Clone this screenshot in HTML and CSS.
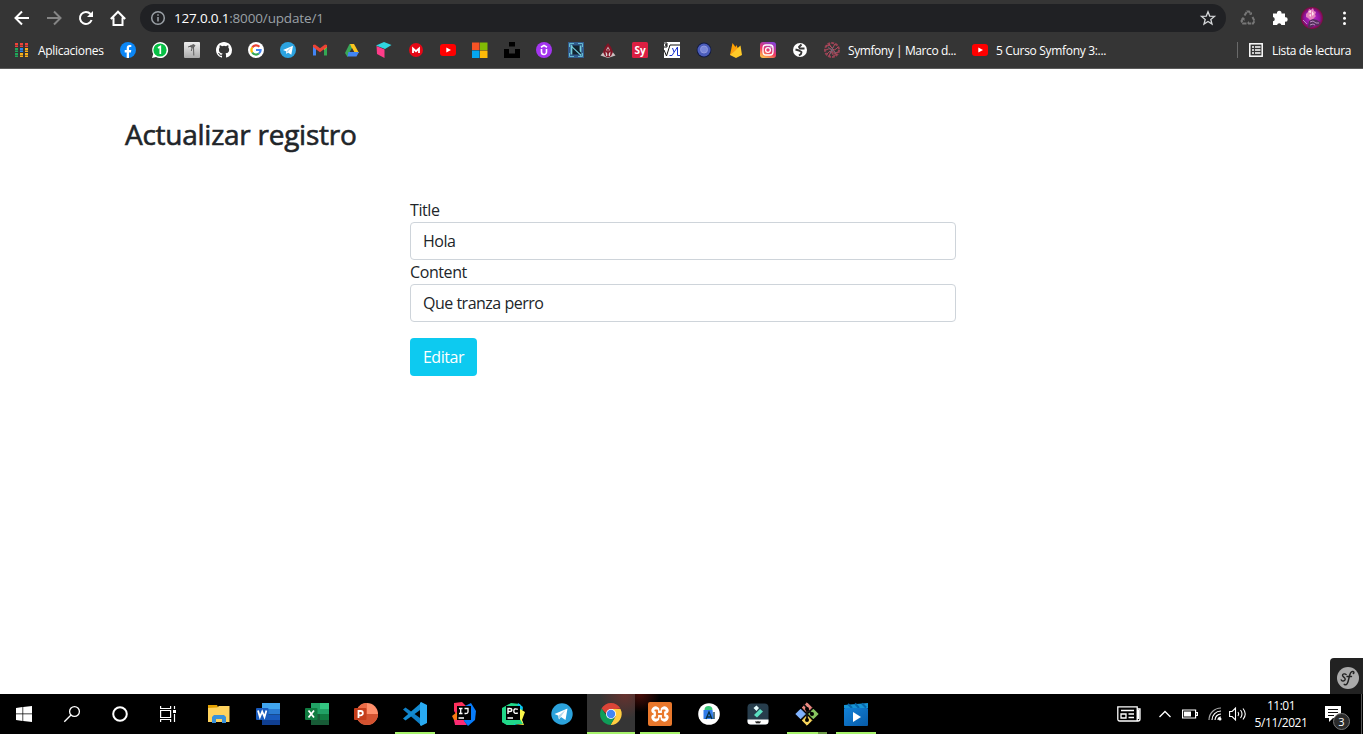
FILE: index.html
```html
<!DOCTYPE html>
<html lang="es">
<head>
<meta charset="utf-8">
<title>Actualizar registro</title>
<link rel="stylesheet" href="styles.css">
</head>
<body>
<header class="browser">
  <div class="toolbar">
    <nav class="nav">
      <svg class="i16" viewBox="0 0 16 16" fill="none" stroke="#fff" stroke-width="2"><path d="M15 8H2M8 1.5L1.500 8L8 14.500"/></svg>
      <svg class="i16" viewBox="0 0 16 16" fill="none" stroke="#858585" stroke-width="2"><path d="M1 8h13M8 1.500L14.500 8L8 14.500"/></svg>
      <svg class="i16" viewBox="0 0 16 16" fill="none" stroke="#fff" stroke-width="2"><path d="M13.600 10A6 6 0 1 1 12.500 4"/><path d="M15 1v6H9z" fill="#fff" stroke="none"/></svg>
      <svg class="i16" viewBox="0 0 16 16" fill="none" stroke="#fff" stroke-width="2"><path d="M0.800 9L8 1.700L15.200 9M3.500 7.500V15H12.500V7.500"/></svg>
    </nav>
    <div class="address">
      <svg class="i16" viewBox="0 0 16 16" fill="none" stroke="#9aa0a6" stroke-width="1.500"><circle cx="8" cy="8" r="6.300"/><path d="M8 7v4.500M8 4.200v1.600"/></svg>
      <span class="url"><b>127.0.0.1</b>:8000/update/1</span>
      <svg class="i16 star" viewBox="0 0 16 16" fill="none" stroke="#d5d7d9" stroke-width="1.300"><path d="M8 1.800L9.700 6.100L14.500 6.400L10.800 9.400L12 14L8 11.500L4 14L5.200 9.400L1.500 6.400L6.300 6.100Z"/></svg>
    </div>
    <div class="extensions">
      <svg class="i16" viewBox="0 0 16 16" fill="none" stroke="#777" stroke-width="2"><path d="M4.500 5.500L7 1.500H9L11 4.500M12.500 7L14.500 11L13 13.500H9M6.500 13.500H3L1.500 11L3.500 7.500" stroke-dasharray="4 .7"/><path d="M9 4.500h3V2zM9 11v4l-2-2zM1 8h3.500v3z" fill="#777" stroke="none"/></svg>
      <svg class="i16" viewBox="0 0 16 16" fill="#fff"><path d="M1 3.500h4a2.300 2.300 0 1 1 4.500 0H13V7.300a2.200 2.200 0 1 1 0 4.300V15H9.400a2.200 2.200 0 0 0-4.300 0H1v-3.700a2.200 2.200 0 0 0 0-4.300z"/></svg>
      <svg class="avatar" viewBox="0 0 22 22"><defs><radialGradient id="av"><stop offset="0" stop-color="#c32bd0"/><stop offset=".7" stop-color="#8f14a0"/><stop offset="1" stop-color="#7c0b3b"/></radialGradient></defs><circle cx="11" cy="11" r="11" fill="url(#av)"/><path d="M5 7l2-2 1-3 2 1 2-2 1 3 2 1-1 3 1 1-3 3-3 1-2-2-2-1z" fill="#e583bd"/><path d="M7 5l3-2v3zM11 4l2 3-2 2zM8 8l2-1v3z" fill="#ffe2ed"/><path d="M7 19l1-5 4-2 4 1 4 3-3 3-3-1-3 2-4 1z" fill="#54305c"/><path d="M9 15l3-1 3 2 3 0M9 18l3-1 2 1M2 13l4 4" stroke="#b98bc0" fill="none"/></svg>
      <svg class="i16" viewBox="0 0 16 16" fill="#fff"><circle cx="8.500" cy="3" r="1.500"/><circle cx="8.500" cy="8.300" r="1.500"/><circle cx="8.500" cy="13.500" r="1.500"/></svg>
    </div>
  </div>
  <div class="bookmarks">
    <div class="apps">
      <svg class="apps-icon" viewBox="0 0 13 14"><path fill="#ee4339" d="M0 0h3v4H0zM5 0h3v4H5zM10 0h3v4h-3z"/><path fill="#1fa85a" d="M0 5h3v4H0zM0 10h3v4H0z"/><path fill="#2688ee" d="M5 5h3v4H5z"/><path fill="#f9b11b" d="M10 5h3v4h-3zM5 10h3v4H5zM10 10h3v4h-3z"/><path d="M0 2.500h13M0 7.500h13M0 12.500h13" stroke="#353535" stroke-width=".5"/></svg>
      <span>Aplicaciones</span>
    </div>
    <div class="favs">
      <svg viewBox="0 0 16 16"><circle cx="8" cy="8" r="8" fill="#0b86f5"/><path fill="#fff" d="M6.700 16v-5.500H4.700V8h2V6.300c0-2.200 1.200-3.300 3-3.300l1.600.1v2h-1c-1 0-1.300.5-1.300 1.200V8h2.300l-.4 2.500H9V16z"/></svg>
      <svg viewBox="0 0 16 16"><path fill="#fff" d="M0 16l1.200-4A8 8 0 1 1 4 14.900z"/><circle cx="8" cy="8" r="6.600" fill="#08bf45"/><path d="M6 6l2.300-1.500V12" stroke="#fff" stroke-width="1.700" fill="none"/></svg>
      <svg viewBox="0 0 16 16"><defs><linearGradient id="gr" x2="0" y2="1"><stop stop-color="#eee"/><stop offset="1" stop-color="#aaa"/></linearGradient></defs><rect width="16" height="16" rx="1" fill="url(#gr)"/><path d="M4.500 4.500l5-2.500 2 1.500-1.500 2-3-.3z" fill="#666"/><path d="M4 5l3-1M8 6l-.7 3M9.500 5l.3 8.500M7 5l2 1" stroke="#555" stroke-width=".9" fill="none"/></svg>
      <svg viewBox="0 0 16 16"><path fill="#fff" d="M8 0C3.580 0 0 3.580 0 8c0 3.540 2.290 6.530 5.470 7.590.4.070.55-.17.55-.38v-1.490c-2.010.37-2.530-.49-2.690-.94-.09-.23-.48-.94-.82-1.130-.28-.15-.68-.52-.01-.53.63-.01 1.080.58 1.230.82.72 1.210 1.870.87 2.330.66.070-.52.28-.87.51-1.070-1.780-.2-3.640-.89-3.640-3.950 0-.87.31-1.590.82-2.150-.08-.2-.36-1.020.08-2.120 0 0 .67-.21 2.200.82a7.600 7.600 0 0 1 4 0c1.530-1.040 2.200-.82 2.200-.82.44 1.100.16 1.920.08 2.120.51.56.82 1.270.82 2.150 0 3.070-1.870 3.750-3.650 3.950.29.25.54.73.54 1.480v2.200c0 .21.15.46.55.38A8.010 8.010 0 0 0 16 8c0-4.420-3.580-8-8-8z"/></svg>
      <svg viewBox="0 0 16 16"><circle cx="8" cy="8" r="8" fill="#fff"/><g fill="none" stroke-width="2.200"><path d="M4.200 5.500A4.600 4.600 0 0 1 11.400 4.700" stroke="#ea4335"/><path d="M4.200 5.500a4.600 4.600 0 0 0 0 5" stroke="#fbbc05"/><path d="M4.200 10.500a4.600 4.600 0 0 0 6.700 1" stroke="#34a853"/><path d="M10.900 11.500A4.500 4.500 0 0 0 12.600 8H8" stroke="#4285f4"/></g></svg>
      <svg viewBox="0 0 16 16"><circle cx="8" cy="8" r="8" fill="#2ca3e0"/><path fill="#fff" d="M3 8l10-4.200-1.700 9L8 10.400l-1.600 1.700L6 9.300z"/><path d="M6.500 9.500l4-3.500-3 4" stroke="#afd6ec" fill="#afd6ec" stroke-width=".6"/></svg>
      <svg viewBox="0 0 16 16"><path fill="#4285f4" d="M1 4l3 2v7.500H1z"/><path fill="#34a853" d="M12 6l3-2v9.500h-3z"/><path fill="#fbbc04" d="M12 4l3-1v2l-3 3z"/><path fill="#ea4335" d="M1 3l2-.5L8 6.300l5-3.800 2 .5v2L8 10.300 1 5z"/></svg>
      <svg viewBox="0 0 16 16"><path fill="#3aa757" d="M5.500 2H8l2 3.500L3.500 15 1 11z"/><path fill="#fcc51d" d="M6 2h4l5 9H10z"/><path fill="#4285f4" d="M4.500 10H15l-2.500 4.500h-9z"/><path fill="#353535" d="M8 6l2.300 4H5.700z"/></svg>
      <svg viewBox="0 0 16 16"><path fill="#30d4df" d="M0 3.500L8 0l7.500 3L9 7z"/><path fill="#ff3c89" d="M.5 4L8.500 7.500V16L1 12z"/></svg>
      <svg viewBox="0 0 16 16"><circle cx="8" cy="8" r="7" fill="#e60816"/><path d="M5 11V6.500l3 2.700 3-2.700V11" stroke="#fff" stroke-width="1.800" fill="none"/></svg>
      <svg viewBox="0 0 16 16"><rect y="2" width="16" height="12" rx="3" fill="#f00"/><path d="M6.300 5.500v5L11 8z" fill="#fff"/></svg>
      <svg viewBox="0 0 16 16"><path fill="#f65325" d="M0 .5h7.500V8H0z"/><path fill="#82bb05" d="M8 .5h7.500V8H8z"/><path fill="#05a6f0" d="M0 8.500h7.500V16H0z"/><path fill="#feba08" d="M8 8.500h7.500V16H8z"/></svg>
      <svg viewBox="0 0 16 16"><path d="M5 0h6v4.500H5zM0 7h5v4.500h6V7h5v9H0z"/></svg>
      <svg viewBox="0 0 16 16"><circle cx="8" cy="8" r="8" fill="#a435f0"/><path d="M5.500 7v3a2.500 2.500 0 0 0 5 0V7M5 5.200l3-1.800 3 1.800" stroke="#fff" stroke-width="1.600" fill="none"/></svg>
      <svg viewBox="0 0 16 16"><rect width="16" height="16" fill="#315b8d"/><path d="M3.500 3.500h9v9h-9z" fill="#12222f"/><path d="M1.500 5V1.500H6M10 1.500h4.500V5M1.500 11v3.500H6M10 14.500h4.500V11" stroke="#63b9cf" fill="none"/><path d="M3.500 12.500V4l9 8.500V3.500" stroke="#74cbd9" stroke-width="1.700" fill="none"/><path d="M5 4l8 7.500" stroke="#12222f" stroke-width="1.500"/></svg>
      <svg viewBox="0 0 16 16"><path fill="#cbbfc0" d="M.5 13.500L5 8l6 0 4.500 5.500L8 16z"/><path fill="#811425" d="M8 1l3 4 2 5-2 4-3 1.500L5 14l-2-4 2-5z"/><path d="M8 4.500l2 3.500-2 2-2-2z" fill="#c8a4aa"/><path d="M5.500 9.500L8 12l2.500-2.500L10 14H6z" fill="#ddd3d3"/><path d="M8 7v8" stroke="#811425" stroke-width="1.400"/></svg>
      <svg viewBox="0 0 16 16"><rect width="16" height="16" rx="1.500" fill="#dc1f42"/><text class="sy" x="8" y="11.500">Sy</text></svg>
      <svg viewBox="0 0 16 16"><path fill="#fff" d="M0 0h16v16H0z"/><path d="M0 1h3v2H1h2v2H0M0 8l2.500 6L6 3h10" stroke="#111" fill="none"/><path d="M5.500 13.500H8L13.500 5v8.500H16M8.500 6l1.500 4" stroke="#1932cf" fill="none"/></svg>
      <svg viewBox="0 0 16 16"><circle cx="8" cy="8" r="7.400" fill="#111a41"/><circle cx="8" cy="8" r="6.500" fill="#4b5dbb"/><circle cx="8" cy="7.500" r="3.500" fill="#7886d8" stroke="#9099de"/></svg>
      <svg viewBox="0 0 16 16"><path fill="#ffa000" d="M2 13L4.500 1l3 4 1-2 4 10z"/><path fill="#ffca28" d="M2 13L12.500 3.500 14 13l-6 3z"/><path fill="#f9a01b" d="M2 13L7 5l1.500 2.500z"/></svg>
      <svg viewBox="0 0 16 16"><defs><linearGradient id="ig" x1=".2" y1="1" x2=".7" y2="0"><stop stop-color="#fec349"/><stop offset=".45" stop-color="#ef3862"/><stop offset="1" stop-color="#8b42d5"/></linearGradient></defs><rect width="16" height="16" rx="3" fill="url(#ig)"/><rect x="3" y="3" width="10" height="10" rx="3" fill="none" stroke="#fff" stroke-width="1.300"/><circle cx="8" cy="8" r="2.400" fill="none" stroke="#fff" stroke-width="1.300"/><circle cx="11" cy="5" r=".7" fill="#fff"/></svg>
      <svg viewBox="0 0 16 16"><circle cx="8" cy="8" r="7" fill="#fff"/><path d="M9.500 2.500L7 5l1 1.500h4.500M3.500 7.500l3.500 1 2.500 1.500-.5 2L7 13.500" stroke="#353535" stroke-width="1.900" fill="none" stroke-linejoin="round"/></svg>
    </div>
    <div class="mark mark-marco">
      <svg class="i16" viewBox="0 0 16 16" fill="none"><circle cx="8" cy="8" r="7" stroke="#984254" stroke-width="2" stroke-dasharray="3 1"/><path d="M2 4q4-2 6 2t6-1M2 8q5-3 6 1t6 1M3 12q4-5 5-1t5 1M5 2q4 5 7 10M11 2Q8 7 5 14" stroke="#b94c60"/><path d="M4 5l8 6M6 12l3-7" stroke="#667080" stroke-width=".8"/></svg>
      <span>Symfony | Marco d...</span>
    </div>
    <div class="mark mark-curso">
      <svg class="i16" viewBox="0 0 16 16"><rect y="2" width="16" height="12" rx="3" fill="#f00"/><path d="M6.300 5.500v5L11 8z" fill="#fff"/></svg>
      <span>5 Curso Symfony 3:...</span>
    </div>
    <div class="reading">
      <svg class="list-icon" viewBox="0 0 14 14" fill="none" stroke="#fff"><rect x=".8" y=".8" width="12.400" height="12.400" stroke-width="1.500"/><path d="M3 4h2M6 4h5.500M3 7h2M6 7h5.500M3 10h2M6 10h5.500" stroke-width="1.600"/></svg>
      <span>Lista de lectura</span>
    </div>
  </div>
</header>
<main class="page">
  <h3 class="heading">Actualizar registro</h3>
  <form class="form">
    <label for="title">Title</label>
    <input class="field" id="title" value="Hola">
    <label for="content">Content</label>
    <input class="field" id="content" value="Que tranza perro">
    <button class="save" type="button">Editar</button>
  </form>
  <div class="debug">
    <svg viewBox="0 0 24 24"><circle cx="12" cy="12" r="11" fill="#aaa"/><path d="M10.200 8.600c-1.200-1.300-3.800-.8-3.700.8.100 1.700 3 1.900 2.700 4-.3 2-3.500 2.200-4 .5M8.200 18.300c2.600 1.500 3.800-1.500 4.800-6.300.9-4.300 1.900-7 4-6.500 1.200.3 1.200 1.600.3 2M11 10.500h4.500" fill="none" stroke="#222" stroke-width="1.400" stroke-linecap="round"/></svg>
  </div>
</main>
<footer class="taskbar">
  <div class="system">
    <div class="cell"><svg class="i16" viewBox="0 0 16 16" fill="#fff"><path d="M0 2l6.500-1v6.500H0zM7.200.9L16 0v7.500H7.200zM0 8.300h6.500V15L0 14zM7.200 8.300H16V16l-8.800-1z"/></svg></div>
    <div class="cell"><svg class="i16" viewBox="0 0 16 16" fill="none" stroke="#fff" stroke-width="1.300"><circle cx="10.500" cy="5.500" r="4.900"/><path d="M7 9L.3 15.700"/></svg></div>
    <div class="cell"><svg class="i16" viewBox="0 0 16 16" fill="none" stroke="#fff" stroke-width="2"><circle cx="8" cy="8" r="6.800"/></svg></div>
    <div class="cell"><svg class="i16" viewBox="0 0 16 16" fill="none" stroke="#fff" stroke-width="1.200"><path d="M.6 0v2.500h10V0M.6 16v-2.500h10V16M.6 4.500h10v7H.6zM14.500 0v3M14.500 8v8"/><path d="M13 4h3v3h-3z" fill="#fff" stroke="none"/></svg></div>
  </div>
  <div class="programs">
    <div class="app"><svg viewBox="0 0 24 24"><path fill="#e3a000" d="M1 3h9l1 2-1 2H1z"/><path fill="#ffd35e" d="M1 6l9-.5L12 4h10.500v16H1z"/><path fill="#3992da" d="M5 21v-6l2-2h10l2 2v6h-4v-4H9v4z"/></svg></div>
    <div class="app"><svg viewBox="0 0 24 24"><path fill="#41a5ee" d="M6 1h18v6H6z"/><path fill="#2b7cd3" d="M6 7h18v5.500H6z"/><path fill="#185abd" d="M6 12.500h18V18H6z"/><path fill="#103f91" d="M6 18h18v5H6z"/><rect y="6" width="12.500" height="12" rx="1" fill="#185abd"/><path d="M2 8.500L3.900 15l2.300-5.500L8.500 15l1.900-6.500" stroke="#fff" stroke-width="1.800" fill="none"/></svg></div>
    <div class="app"><svg viewBox="0 0 24 24"><path fill="#21a366" d="M6 1h9v11H6z"/><path fill="#33c481" d="M15 1h9v6h-9z"/><path fill="#21a366" d="M15 7h9v5h-9z"/><path fill="#107c41" d="M15 12h9v6h-9z"/><path fill="#185c37" d="M6 12h9v6h9v5H6z"/><rect y="6" width="12.500" height="12" rx="1" fill="#107c41"/><path d="M3.500 8.500l5.500 7M9 8.500l-5.500 7" stroke="#fff" stroke-width="1.800"/></svg></div>
    <div class="app"><svg viewBox="0 0 24 24"><circle cx="13" cy="12" r="11" fill="#ff8f6b"/><path d="M2 12a11 11 0 0 0 22 0z" fill="#d35230"/><path d="M13 1a11 11 0 0 0-11 11h11z" fill="#ed6c47"/><rect y="6" width="12.500" height="12" rx="1" fill="#c43e1c"/><path d="M4.500 16V9h2.200a2 2 0 0 1 0 4.300H4.500" stroke="#fff" stroke-width="1.800" fill="none"/></svg></div>
    <div class="app open"><svg viewBox="0 0 24 24"><path fill="#0f7fc6" d="M0 7.500L2.500 5.500 18.500 17v6.500z"/><path fill="#138bd2" d="M0 16.500l2.500 2L18.500 7V.5z"/><path fill="#29aaf2" d="M18 0l6 3v18l-6 3-1-1V1z"/></svg></div>
    <div class="app"><svg viewBox="0 0 24 24"><path fill="#fe315d" d="M2 1l8-1 6 6-9 11L2 9z"/><path fill="#f97a12" d="M0 14l5-4 5 9-6 3z"/><path fill="#fc2b73" d="M2 18l9-1 4 6H3z"/><path fill="#087cfa" d="M13 4l6-3 5 8-1 9-7 6-4-5z"/><path d="M5 4h14v14H5z"/><path d="M7 6.500h3.500M8.700 6.500v5M7 11.500h3.500M12.500 6.500H16V10q0 1.500-2 1.500h-1.500M6.500 16H12" stroke="#fff" stroke-width="1.300" fill="none"/></svg></div>
    <div class="app"><svg viewBox="0 0 24 24"><path fill="#21d789" d="M1 6l9-5 9 1 3 5-8 16-8 0-5-3z"/><path fill="#07c3f2" d="M17 1l5 4-3 8 3 8-9 2z"/><path fill="#fcf84a" d="M19 7l5 3-3 8 2 5-9-1z"/><path fill="#21d789" d="M2 17l17 0 3 5-8 0-8 1-5-3z"/><path d="M5 4h14v14H5z"/><path d="M7 12V6.500h1.800q2 0 2 1.500t-2 1.500H7M16.800 7.300q-4-1.500-4 1.800t4 1.900M6.500 16H12" stroke="#fff" stroke-width="1.400" fill="none"/></svg></div>
    <div class="app"><svg viewBox="0 0 24 24"><circle cx="12" cy="12" r="10.700" fill="#2ba2dc"/><path fill="#fff" d="M4.500 12l13-5.500-2 11.500-4.500-3-2 2.500-1-4z"/><path d="M8 14l7.500-6-4.500 6.500-2 2.500z" fill="#b1d7eb"/></svg></div>
    <div class="app active"><svg viewBox="0 0 24 24"><path fill="#db4437" d="M2.500 6.500A11 11 0 0 1 21.500 6.500L12 7.500l-5 4z"/><path fill="#ffcd40" d="M12 7h9.500a11 11 0 0 1-10 16l5-8.500z"/><path fill="#0f9d58" d="M2.500 6.500a11 11 0 0 0 9 16.500l4-7-5 .5-3-3z"/><circle cx="12" cy="12" r="5" fill="#fff"/><circle cx="12" cy="12" r="4.200" fill="#4285f4"/></svg></div>
    <div class="app open glow"><svg viewBox="0 0 24 24"><rect width="24" height="24" rx="2" fill="#e9782c"/><g fill="none" stroke-linecap="round" stroke-linejoin="round"><path d="M7.500 8.500L12 12l4.500-3.500M7.500 15.500L12 12l4.500 3.500" stroke="#fff" stroke-width="8"/><path d="M7.500 8.500h1.500v7H7.500M16.500 8.500H15v7h1.500M9 12h6" stroke="#e9782c" stroke-width="2.200"/><path d="M3 12h2M19 12h2M12 4v4M12 16v4" stroke="#e9782c" stroke-width="1.500"/></g></svg></div>
    <div class="app"><svg viewBox="0 0 24 24"><circle cx="12" cy="12" r="10.800" fill="#fff"/><path d="M6.500 8h9l1 9h-10z" fill="#327dea"/><path d="M7.500 8a4 4 0 0 1 8 0z" fill="#37c978"/><path d="M9 17l3-7 3 7M10 15h4M17 10v7" stroke="#073042" stroke-width="1.300" fill="none"/></svg></div>
    <div class="app"><svg viewBox="0 0 24 24"><rect x="1.500" y="1.500" width="21" height="21" rx="4" fill="#273d4c"/><path d="M1.500 17.500h21v2q0 3-3 3h-15q-3 0-3-3z" fill="#fff"/><path fill="#e8ffff" d="M7.500 6l3-2.500L13 6l-2.500 3z"/><path fill="#5be0c1" d="M8 13l6-6 3 2.500-6 6z"/><path d="M9.500 19.500l1.500 1.200 1-1 1 1 1.500-1.200" stroke="#222" stroke-width="1.400" fill="none"/></svg></div>
    <div class="app open stacked"><svg viewBox="0 0 24 24"><g stroke-linejoin="round" stroke-width="1"><path fill="#e98880" stroke="#e98880" d="M12 .8L16.800 5.600 12 10.400 7.200 5.600z"/><path fill="#80b3ff" stroke="#80b3ff" d="M5.600 7.200l4.800 4.800-4.800 4.800L.8 12z"/><path fill="#87c45f" stroke="#87c45f" d="M18.400 7.200l4.800 4.800-4.800 4.800-4.800-4.800z"/><path fill="#f8d65c" stroke="#f8d65c" d="M12 13.600l4.800 4.800-4.800 4.800-4.800-4.800z"/></g><path d="M8.500 2L12 6v12M12 7l5 5" stroke="#111" stroke-width="1.800" fill="none"/><circle cx="12" cy="7" r="2"/><circle cx="12" cy="18" r="2"/><circle cx="17" cy="12" r="2"/></svg></div>
    <div class="app open"><svg viewBox="0 0 24 24"><defs><linearGradient id="mv" x2="1" y2="1"><stop stop-color="#1282d8"/><stop offset="1" stop-color="#075aa7"/></linearGradient></defs><path fill="#1593d5" d="M0 3l24-2v5H0z"/><path d="M4 2l4 4M11 1.500l4 4.500M18 1.500l4 4" stroke="#0765a9" stroke-width="2"/><rect y="6" width="24" height="18" rx="1" fill="url(#mv)"/><path fill="#fff" d="M9 10v10l8-5z"/></svg></div>
  </div>
  <div class="tray">
    <svg class="news" viewBox="0 0 24 16" fill="none" stroke="#fff" stroke-width="1.300"><path d="M.8.8h19.400V15H2.800q-2 0-2-2zM20 3h3v10q0 2-2 2h-2M21.500 4v9M4 8h5v4H4zM4 4.500h13M11.500 8H17M11.500 11.500H17"/></svg>
    <svg class="chev" viewBox="0 0 12 8" fill="none" stroke="#fff" stroke-width="1.300"><path d="M.5 7L6 1.500 11.500 7"/></svg>
    <svg class="batt" viewBox="0 0 16 10"><path d="M.6 1h13v8H.6zM14 3.500h1.400v3H14" fill="none" stroke="#fff" stroke-width="1.200"/><path d="M2 2.500h7v5H2z" fill="#fff"/></svg>
    <svg class="wifi" viewBox="0 0 14 14" fill="none" stroke="#fff" stroke-width="1.200"><path d="M1 13A12 12 0 0 1 13 1" stroke="#aaa"/><path d="M4 13a9 9 0 0 1 9-9M7 13a6 6 0 0 1 6-6M10 13a3 3 0 0 1 3-3"/><circle cx="12" cy="12" r="1.500" fill="#fff" stroke="none"/></svg>
    <svg class="sound" viewBox="0 0 18 14" fill="none" stroke="#fff" stroke-width="1.100"><path d="M.6 4.500h2.500L6.500 1v12L3.100 9.500H.6zM9 5q1.500 2 0 4M11.500 3q3 4 0 8M14 1.500q4.500 5.500 0 11"/></svg>
    <div class="clock"><span>11:01</span><span class="date">5/11/2021</span></div>
    <div class="notice">
      <svg viewBox="0 0 16 16"><path fill="#fff" d="M0 0h16v12H8l-4 4v-4H0z"/><path d="M3 3.500h10M3 6.500h10M3 9.500h6" stroke="#111"/></svg>
      <span class="count">3</span>
    </div>
    <div class="peek"></div>
  </div>
</footer>
</body>
</html>
```
FILE: styles.css
```css
* { box-sizing: border-box; }
body { margin: 0; width: 1363px; height: 734px; overflow: hidden; display: flex; flex-direction: column; background: #fff; font-family: "Open Sans", "Noto Sans", sans-serif; }
svg { display: block; flex: none; overflow: visible; }
.i16 { width: 16px; height: 16px; }
.browser { height: 69px; background: #353535; border-bottom: 1px solid #5b5b5b; color: #fff; }
.toolbar { height: 36px; display: flex; align-items: center; padding: 0 11px 0 14px; }
.nav { display: flex; gap: 16px; }
.address { display: flex; align-items: center; width: 1086px; height: 28px; margin-left: 14px; padding: 0 10px; border-radius: 14px; background: #202124; }
.url { margin-left: 8px; color: #9aa0a6; font-size: 13.500px; letter-spacing: -.15px; white-space: nowrap; }
.url b { color: #fff; font-weight: 400; letter-spacing: -.2px; }
.star { margin-left: auto; }
.extensions { display: flex; align-items: center; gap: 16px; margin-left: 14px; }
.avatar { width: 22px; height: 22px; margin: 0 -3px; }
.bookmarks { height: 32px; margin-top: -2px; display: flex; align-items: center; padding: 0 12px 0 15px; font-size: 12px; white-space: nowrap; }
.apps { display: flex; align-items: center; gap: 10px; width: 105px; letter-spacing: -.3px; }
.apps-icon { width: 13px; height: 14px; }
.favs { display: flex; gap: 16px; width: 704px; }
.favs svg { width: 16px; height: 16px; }
.sy { font: 700 10px "Open Sans", sans-serif; fill: #fff; text-anchor: middle; }
.mark { display: flex; align-items: center; gap: 8px; letter-spacing: -.32px; }
.mark-marco { width: 148px; letter-spacing: -.42px; }
.reading { display: flex; align-items: center; gap: 9px; height: 16px; margin-left: auto; padding-left: 11px; border-left: 1px solid #6a6a6a; letter-spacing: -.38px; }
.list-icon { width: 14px; height: 14px; }
.page { position: relative; flex: 1; padding: 48px 125px 0; color: #212529; }
.heading { margin: 0 0 47px; font-size: 28px; line-height: 34px; font-weight: 500; letter-spacing: -.26px; -webkit-text-stroke: .6px #212529; }
.form { display: flex; flex-direction: column; width: 546px; margin-left: 285px; font-size: 16px; line-height: 24px; }
.form label { height: 24px; font-weight: 400; letter-spacing: -.4px; }
.field { width: 546px; height: 38px; padding: 6px 12px; border: 1px solid #ced4da; border-radius: 4px; background: #fff; color: #212529; font: 400 16px/24px "Open Sans", "Noto Sans", sans-serif; letter-spacing: -.5px; }
.save { width: 67px; height: 38px; margin-top: 16px; padding: 0; border: 0; border-radius: 4px; background: #0dcaf0; color: #fff; font: 400 16px/24px "Open Sans", "Noto Sans", sans-serif; letter-spacing: -.45px; }
.debug { position: absolute; right: 0; bottom: 0; width: 33px; height: 36px; padding: 8px 3px 0 6px; border-radius: 4px 0 0; background: #222; }
.debug svg { width: 24px; height: 24px; }
.taskbar { display: flex; height: 40px; background: #000; color: #fff; }
.system { display: flex; width: 194px; }
.cell { display: flex; width: 48px; align-items: center; justify-content: center; }
.programs { display: flex; }
.app { display: flex; width: 49px; height: 40px; align-items: center; justify-content: center; }
.app svg { width: 24px; height: 24px; }
.open { background: linear-gradient(#a6f26b, #a6f26b) 5px 38px / 40px 2px no-repeat; }
.active { border-left: 1px solid #000; background: linear-gradient(#a6f26b, #a6f26b) 0 38px / 48px 2px no-repeat, radial-gradient(circle at 38px 0, #68322e, #353535 25px); }
.glow { background: linear-gradient(#a6f26b, #a6f26b) 5px 38px / 40px 2px no-repeat, radial-gradient(ellipse at 5px 0, #490d08, transparent 20px); }
.stacked { background: linear-gradient(90deg, #a6f26b 31px, #6c9c46 31px) 5px 38px / 40px 2px no-repeat; }
.tray { display: flex; align-items: center; margin-left: auto; }
.news { width: 24px; height: 16px; margin-right: 18px; }
.chev { width: 12px; height: 8px; margin-right: 11px; }
.batt { width: 16px; height: 10px; margin-right: 10px; }
.wifi { width: 14px; height: 14px; margin-right: 7px; }
.sound { width: 18px; height: 14px; margin-right: 4px; }
.clock { display: flex; flex-direction: column; width: 60px; align-items: center; font-size: 12px; line-height: 17px; letter-spacing: -.5px; }
.clock .date { letter-spacing: -.45px; }
.notice { position: relative; width: 26px; height: 18px; margin: 2px 10px 0 14px; }
.notice svg { width: 16px; height: 16px; }
.count { position: absolute; left: 8px; top: 7px; width: 17px; height: 17px; border: 1px solid #777; border-radius: 50%; background: #2b2b2b; font-size: 11px; line-height: 15px; text-align: center; }
.peek { width: 2px; height: 40px; border-left: 1px solid #555; }
```
